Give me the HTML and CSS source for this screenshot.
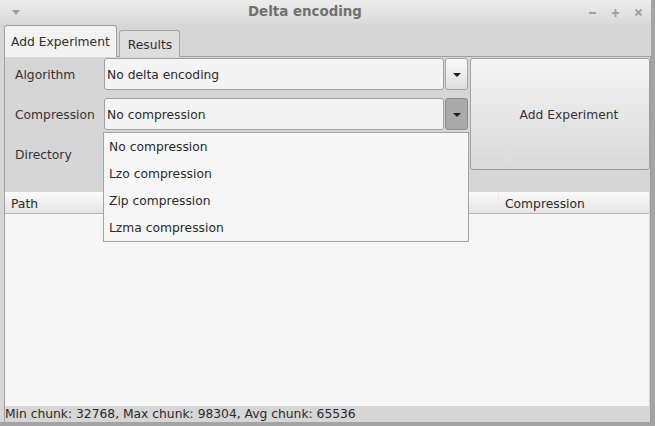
FILE: index.html
```html
<!DOCTYPE html>
<html>
<head>
<meta charset="utf-8">
<link rel="stylesheet" href="styles.css">
</head>
<body>
<div class="window">
  <div class="titlebar">
    <span class="menu-tri"></span>
    <span class="title">Delta encoding</span>
    <div class="wm-btns">
      <svg class="wm" width="9" height="9" viewBox="0 0 9 9"><rect x="1" y="4" width="7" height="2" fill="#a2a2a2"/></svg>
      <svg class="wm" width="9" height="9" viewBox="0 0 9 9"><rect x="1" y="4" width="7" height="2" fill="#a2a2a2"/><rect x="3.5" y="1" width="2" height="8" fill="#a2a2a2"/></svg>
      <svg class="wm" width="9" height="9" viewBox="0 0 9 9"><path d="M1.5 1.5 L7.5 7.5 M7.5 1.5 L1.5 7.5" stroke="#a2a2a2" stroke-width="2"/></svg>
    </div>
  </div>
  <div class="client">
    <div class="tabs">
      <div class="tab active">Add Experiment</div>
      <div class="tab">Results</div>
    </div>
    <div class="pane">
      <div class="form">
        <div class="fields">
          <div class="row">
            <div class="label">Algorithm</div>
            <div class="combo">
              <div class="combo-field">No delta encoding</div>
              <div class="combo-btn"><span class="tri"></span></div>
            </div>
          </div>
          <div class="row">
            <div class="label">Compression</div>
            <div class="combo">
              <div class="combo-field">No compression</div>
              <div class="combo-btn pressed"><span class="tri"></span></div>
            </div>
          </div>
          <div class="row">
            <div class="label">Directory</div>
            <div class="combo">
              <div class="combo-field"></div>
              <div class="combo-btn"><span class="tri"></span></div>
            </div>
          </div>
        </div>
        <div class="add-btn">Add Experiment</div>
      </div>
      <div class="table">
        <div class="thead">
          <div class="th path">Path</div>
          <div class="th comp">Compression</div>
        </div>
        <div class="tbody"></div>
      </div>
      <div class="status">Min chunk: 32768, Max chunk: 98304, Avg chunk: 65536</div>
    </div>
  </div>
  <div class="popup">
    <div class="item">No compression</div>
    <div class="item">Lzo compression</div>
    <div class="item">Zip compression</div>
    <div class="item">Lzma compression</div>
  </div>
</div>
</body>
</html>
```
FILE: styles.css
```css
html, body {
  margin: 0;
  padding: 0;
  background: #d6d6d6;
}
body {
  font-family: "DejaVu Sans", sans-serif;
  font-size: 12.3px;
  color: #2f2f2f;
}
.window {
  position: relative;
  width: 655px;
  height: 426px;
  box-sizing: border-box;
  background: #d6d6d6;
  display: flex;
  flex-direction: column;
  border-right: 4px solid #a4a4a4;
  border-bottom: 4px solid #a4a4a4;
  overflow: hidden;
}
.titlebar {
  height: 24px;
  flex: none;
  display: flex;
  align-items: center;
  background: linear-gradient(#ececec, #dadada);
  position: relative;
}
.menu-tri {
  width: 0;
  height: 0;
  margin-left: 12px;
  border-left: 4px solid transparent;
  border-right: 4px solid transparent;
  border-top: 5px solid #a0a0a0;
}
.title {
  position: absolute;
  left: 248px;
  top: 4px;
  font-weight: bold;
  font-size: 13.4px;
  color: #707070;
}
.wm-btns {
  margin-left: auto;
  margin-right: 8px;
  display: flex;
  gap: 14px;
  margin-top: 1px;
}
.wm { display: block; }
.client {
  flex: 1;
  display: flex;
  flex-direction: column;
  padding-left: 4px;
}
.tabs {
  height: 33px;
  flex: none;
  display: flex;
  align-items: flex-end;
  gap: 2px;
  margin-bottom: -1px;
  position: relative;
  z-index: 1;
}
.tab {
  box-sizing: border-box;
  border: 1px solid #a6a6a6;
  border-bottom: none;
  border-radius: 3px 3px 0 0;
  background: #dedede;
  height: 27px;
  padding: 0 7px 0 8px;
  display: flex;
  align-items: center;
  padding-top: 2px;
}
.tab.active {
  height: 32px;
  background: #f2f2f2;
  padding: 0 6px 0 6px;
  padding-bottom: 0;
  border-color: #a0a0a0;
}
.pane {
  flex: 1;
  display: flex;
  flex-direction: column;
  border: 1px solid #a0a0a0;
  border-bottom: none;
  border-right: 1px solid #9c9c9c;
  background: #d6d6d6;
}
.form {
  display: flex;
  margin-top: 1px;
  gap: 2px;
}
.fields {
  display: flex;
  flex-direction: column;
  gap: 8px;
}
.row {
  display: flex;
  align-items: center;
  height: 32px;
}
.label {
  width: 89px;
  padding-left: 10px;
  color: #333;
  padding-top: 1px;
}
.combo {
  display: flex;
  gap: 1px;
  width: 364px;
  height: 32px;
}
.combo-field {
  flex: 1;
  box-sizing: border-box;
  border: 1px solid #a0a0a0;
  border-radius: 3px;
  background: #f4f4f4;
  display: flex;
  align-items: center;
  padding-left: 2px;
  padding-top: 1px;
  color: #2a2a2a;
}
.combo-btn {
  width: 23px;
  box-sizing: border-box;
  border: 1px solid #a4a4a4;
  border-radius: 3px;
  background: linear-gradient(#fafafa, #dedede);
  display: flex;
  align-items: center;
  justify-content: center;
}
.combo-btn.pressed {
  background: #a9a9a9;
  border-color: #8c8c8c;
}
.tri {
  width: 0;
  height: 0;
  border-left: 4px solid transparent;
  border-right: 4px solid transparent;
  border-top: 4px solid #1e1e1e;
  margin-top: 1px;
}
.add-btn {
  flex: 1;
  box-sizing: border-box;
  height: 112px;
  border: 1px solid #a2a2a2;
  border-radius: 3px;
  background: linear-gradient(#f4f4f4, #d9d9d9);
  display: flex;
  align-items: center;
  justify-content: center;
  padding-left: 18px;
  padding-top: 2px;
  color: #333;
}
.table {
  flex: 1;
  display: flex;
  flex-direction: column;
  margin-top: 22px;
  margin-right: 1px;
}
.thead {
  height: 21px;
  display: flex;
  background: linear-gradient(#fbfbfb, #e4e4e4);
  border-bottom: 1px solid #b4b4b4;
}
.th {
  display: flex;
  align-items: center;
  padding-left: 6px;
  padding-top: 2px;
  color: #2a2a2a;
}
.th.path {
  width: 487px;
}
.th.comp {
  flex: 1;
  border-left: 1px solid #ececec;
}
.tbody {
  flex: 1;
  background: #f6f6f6;
}
.status {
  height: 16px;
  line-height: 16px;
  color: #2a2a2a;
  background: #d6d6d6;
}
.popup {
  position: absolute;
  left: 103px;
  top: 132px;
  width: 366px;
  box-sizing: border-box;
  border: 1px solid #a4a4a4;
  background: #f6f6f6;
  z-index: 5;
}
.item {
  height: 27px;
  display: flex;
  align-items: center;
  padding-left: 5px;
  color: #2a2a2a;
}
```
